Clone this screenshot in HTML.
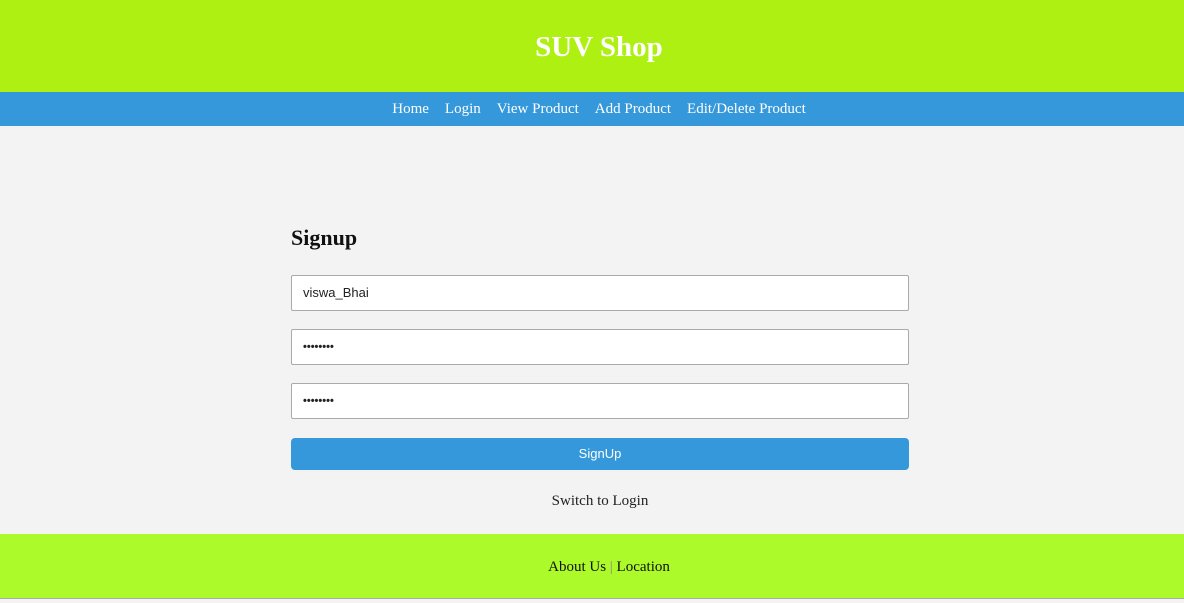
<!DOCTYPE html>
<html><head><style>
body{margin:0;width:1184px;height:603px;background:#f3f3f3;font-family:"Liberation Serif",serif;overflow:hidden;position:relative}
.hdr{position:absolute;top:0;left:0;width:1184px;height:92px;background:#aef012;color:#fff;text-align:center;font-weight:bold;font-size:29px;line-height:94px;padding-left:14px;box-sizing:border-box}
.nav{position:absolute;top:92px;left:0;width:1184px;height:34px;background:#3498db;text-align:center;line-height:34px;font-size:15px;color:#fff;padding-left:14px;box-sizing:border-box}
.nav span{margin:0 8px}
h2{position:absolute;top:225px;left:291px;margin:0;font-size:22px;color:#111}
.in{position:absolute;left:291px;background:#fff;border:1px solid #aaa;border-radius:2px;font-family:"Liberation Sans",sans-serif;font-size:13px;line-height:34px;padding-left:11px;box-sizing:border-box;width:618px;height:36px;color:#222}
.btn{position:absolute;left:291px;top:438px;width:618px;height:32px;background:#3498db;border-radius:4px;color:#fff;text-align:center;line-height:32px;font-family:"Liberation Sans",sans-serif;font-size:13px}
.sw{position:absolute;top:493px;left:0;width:1184px;text-align:center;font-size:15px;color:#222;padding-left:16px;box-sizing:border-box}
.ftr{position:absolute;top:534px;left:0;width:1184px;height:64px;background:#adfa2a;text-align:center;line-height:66px;font-size:15px;color:#111;border-bottom:1px solid #aaa;padding-left:34px;box-sizing:content-box}
</style></head><body>
<div class="hdr">SUV Shop</div>
<div class="nav"><span>Home</span><span>Login</span><span>View Product</span><span>Add Product</span><span>Edit/Delete Product</span></div>
<h2>Signup</h2>
<div class="in" style="top:275px">viswa_Bhai</div>
<div class="in" style="top:329px;font-size:11px;font-weight:bold">••••••••</div>
<div class="in" style="top:383px;font-size:11px;font-weight:bold">••••••••</div>
<div class="btn">SignUp</div>
<div class="sw">Switch to Login</div>
<div class="ftr" style="width:1150px">About Us <span style="color:#888">|</span> Location</div>
</body></html>
